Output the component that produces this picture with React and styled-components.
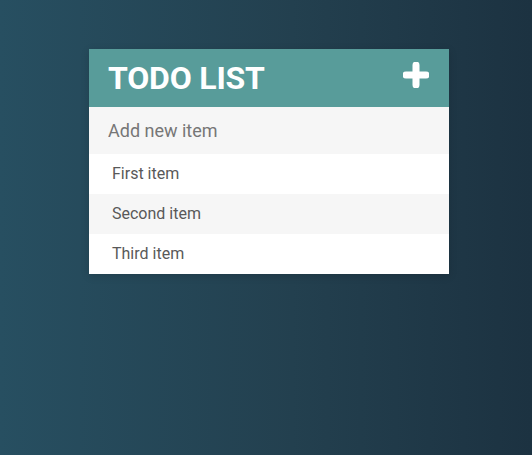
import React, { useState } from "react";
import styled, { createGlobalStyle } from "styled-components";

const GlobalStyle = createGlobalStyle`
  html, body {
    margin: 0;
    height: 100%;
  }

  body {
    font-family: Roboto, "Liberation Sans", sans-serif;
    background: linear-gradient(to right, #274f61 0%, #23404f 55%, #1c3241 100%);
    min-height: 455px;
  }
`;

const StyledPage = styled.div`
  padding: 49px 0 0 89px;
`;

const StyledCard = styled.div`
  width: 360px;
  background: #fff;
  box-shadow: 0 2px 8px rgba(0, 0, 0, 0.15);
`;

const StyledHeader = styled.div`
  height: 58px;
  display: flex;
  align-items: center;
  justify-content: space-between;
  padding: 0 20px 0 19px;
  background: #589c9a;
  box-sizing: border-box;
`;

const StyledTitle = styled.h1`
  margin: 0;
  color: #fff;
  font-size: 32px;
  font-weight: 700;
  letter-spacing: -0.2px;
  line-height: 1;
`;

const StyledAdd = styled.button`
  border: none;
  background: none;
  padding: 0;
  display: flex;
  margin-top: -6px;
  cursor: pointer;
`;

const StyledInput = styled.input`
  display: block;
  width: 100%;
  height: 47px;
  box-sizing: border-box;
  border: none;
  outline: none;
  padding: 0 19px;
  background: #f6f6f6;
  font-family: inherit;
  font-size: 18px;
  color: #555;

  &::placeholder {
    color: #767676;
  }
`;

const StyledList = styled.ul`
  list-style: none;
  margin: 0;
  padding: 0;
`;

const StyledItem = styled.li`
  height: 40px;
  display: flex;
  align-items: center;
  padding: 0 23px 2px;
  box-sizing: border-box;
  font-size: 16px;
  color: #595959;
  background: ${({ $odd }) => ($odd ? "#f6f6f6" : "#fff")};
`;

function PlusIcon() {
  return (
    <svg width="26" height="26" viewBox="0 0 26 26">
      <path
        d="M13 3v20M3 13h20"
        stroke="#fff"
        strokeWidth="7"
        strokeLinecap="round"
      />
    </svg>
  );
}

export default function App() {
  const [items] = useState(["First item", "Second item", "Third item"]);

  return (
    <>
      <GlobalStyle />
      <StyledPage>
        <StyledCard>
          <StyledHeader>
            <StyledTitle>TODO LIST</StyledTitle>
            <StyledAdd type="button" aria-label="Add">
              <PlusIcon />
            </StyledAdd>
          </StyledHeader>
          <StyledInput type="text" placeholder="Add new item" />
          <StyledList>
            {items.map((item, i) => (
              <StyledItem key={item} $odd={i % 2 === 1}>
                {item}
              </StyledItem>
            ))}
          </StyledList>
        </StyledCard>
      </StyledPage>
    </>
  );
}
